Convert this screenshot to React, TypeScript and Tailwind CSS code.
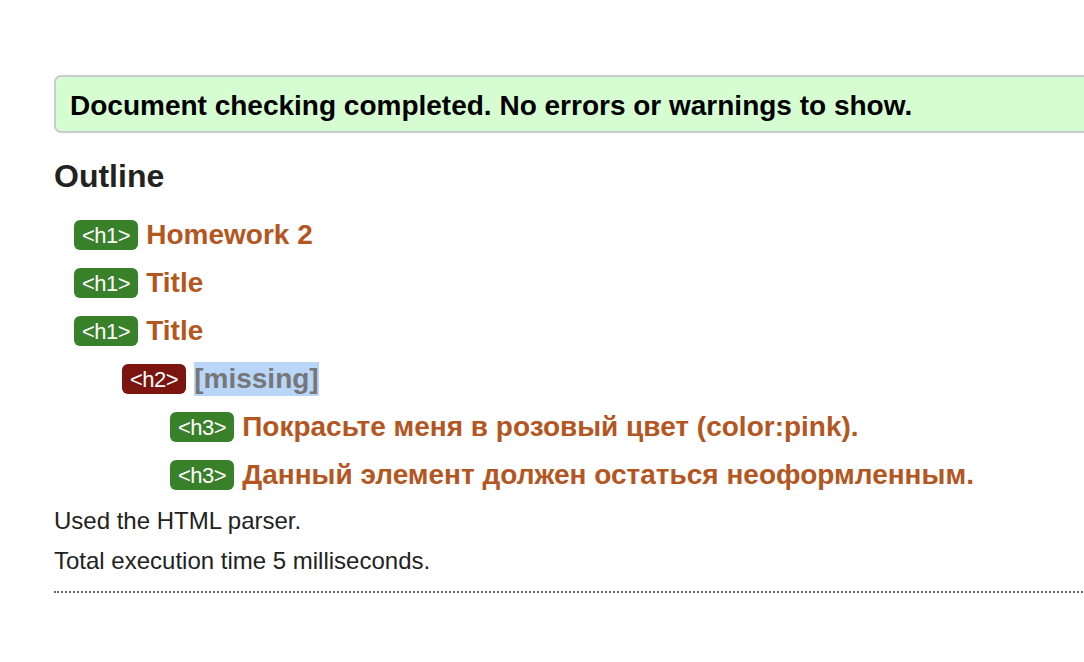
const rows = [
  { tag: "h1", level: 1, text: "Homework 2" },
  { tag: "h1", level: 1, text: "Title" },
  { tag: "h1", level: 1, text: "Title" },
  { tag: "h2", level: 2, text: "[missing]", missing: true },
  { tag: "h3", level: 3, text: "Покрасьте меня в розовый цвет (color:pink)." },
  { tag: "h3", level: 3, text: "Данный элемент должен остаться неоформленным." },
]

const indent: Record<number, string> = {
  1: "pl-[20px]",
  2: "pl-[68px]",
  3: "pl-[116px]",
}

export default function App() {
  return (
    <div className="h-[662px] w-[1084px] overflow-hidden bg-white font-['Liberation_Sans',Arial,sans-serif] text-[#222]">
      <div className="ml-[54px] w-[1100px] pt-[75px]">
        <div className="flex h-[58px] items-center rounded-[7px] border-2 border-[#cbcbcb] bg-[#d6fdd1] pl-[14px] pt-[3px] text-[28px] font-bold text-black">
          Document checking completed. No errors or warnings to show.
        </div>

        <h2 className="mt-[23px] text-[32px] font-bold leading-[40px] text-[#222]">
          Outline
        </h2>

        <ul className="mt-[15px] flex flex-col">
          {rows.map((r, i) => (
            <li key={i} className={`flex h-[48px] items-center gap-[8px] ${indent[r.level]}`}>
              <span
                className={`flex h-[30px] items-center rounded-[6px] px-[8px] text-[22px] tracking-[-0.5px] text-white ${
                  r.level === 2 ? "bg-[#7a1510]" : "bg-[#39802a]"
                }`}
              >
                &lt;{r.tag}&gt;
              </span>
              <span
                className={`text-[28px] font-bold leading-[34px] ${
                  r.missing ? "bg-[#b9d6f9] text-[#777]" : "text-[#b4561f]"
                }`}
              >
                {r.text}
              </span>
            </li>
          ))}
        </ul>

        <p className="mt-[8px] text-[24px] leading-[28px] text-[#222]">Used the HTML parser.</p>
        <p className="mt-[12px] text-[24px] leading-[28px] text-[#222]">
          Total execution time 5 milliseconds.
        </p>
        <div className="mt-[16px] border-t-2 border-dotted border-[#666]" />
      </div>
    </div>
  )
}
